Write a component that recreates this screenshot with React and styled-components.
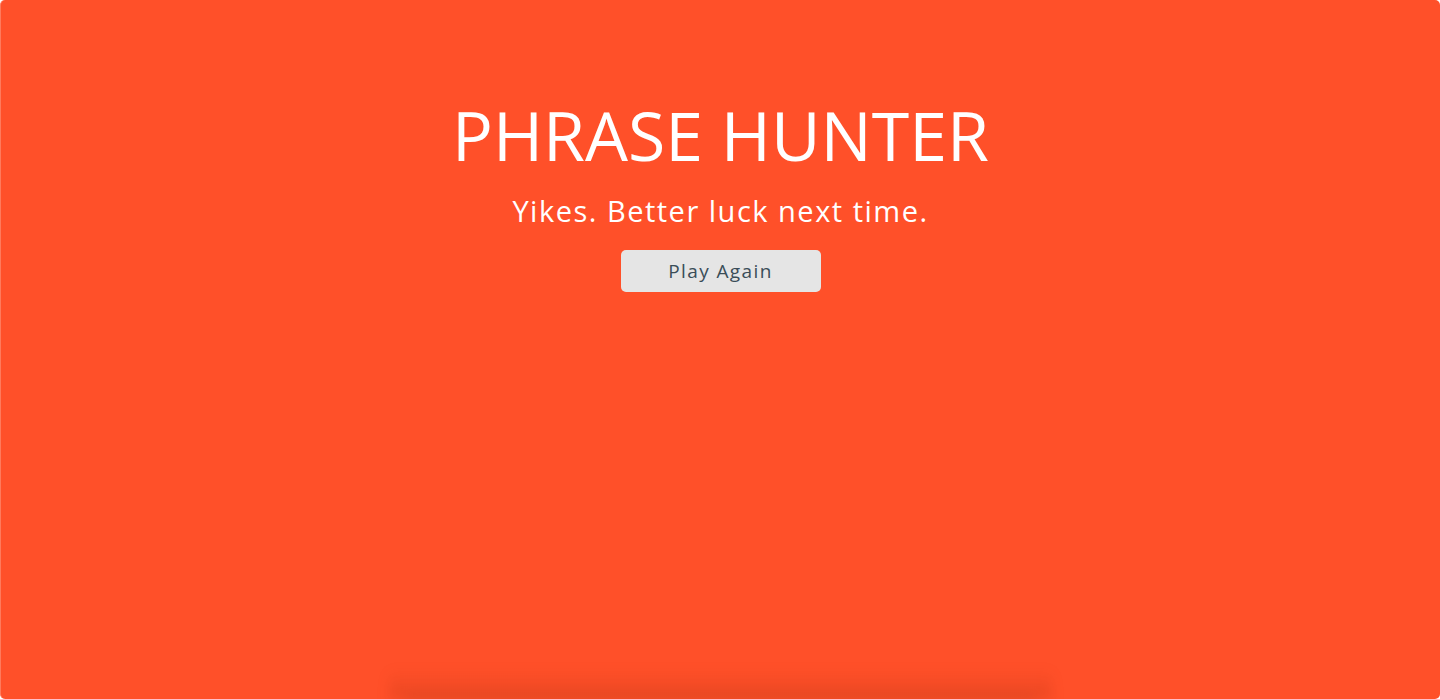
import React from "react";
import styled, { createGlobalStyle } from "styled-components";

const GlobalStyle = createGlobalStyle`
  html, body {
    margin: 0;
    padding: 0;
    background: #ffffff;
  }
  body {
    font-family: "Open Sans", "Liberation Sans", sans-serif;
  }
`;

const Overlay = styled.div`
  position: relative;
  box-sizing: border-box;
  height: 699px;
  background: #ff5029;
  border-radius: 5px;
  border-left: 1px solid #ff7a5c;
  display: flex;
  flex-direction: column;
  align-items: center;
  padding-top: 95px;
  overflow: hidden;
`;

const Title = styled.h1`
  margin: 0;
  font-size: 68px;
  line-height: 80px;
  font-weight: 400;
  color: #ffffff;
  letter-spacing: 0;
`;

const Message = styled.h2`
  margin: 18px 0 0;
  font-size: 29px;
  line-height: 36px;
  font-weight: 400;
  color: #ffffff;
  letter-spacing: 1.5px;
`;

const ResetButton = styled.button`
  margin-top: 21px;
  width: 200px;
  height: 42px;
  border: none;
  border-radius: 5px;
  background: #e5e5e5;
  color: #3a4d58;
  font-family: inherit;
  font-size: 19px;
  letter-spacing: 1.4px;
  cursor: pointer;
`;

const BottomShade = styled.div`
  position: absolute;
  left: 388px;
  right: 388px;
  bottom: 0;
  height: 30px;
  background: linear-gradient(to bottom, rgba(160, 40, 10, 0), rgba(160, 40, 10, 0.22));
  filter: blur(6px);
  &::after {
    content: "";
    position: absolute;
    left: 17px;
    right: 17px;
    bottom: 0;
    height: 1px;
    background: #7a3320;
  }
`;

export default function App() {
  return (
    <>
      <GlobalStyle />
      <Overlay>
        <Title>PHRASE HUNTER</Title>
        <Message>Yikes. Better luck next time.</Message>
        <ResetButton>Play Again</ResetButton>
        <BottomShade />
      </Overlay>
    </>
  );
}
